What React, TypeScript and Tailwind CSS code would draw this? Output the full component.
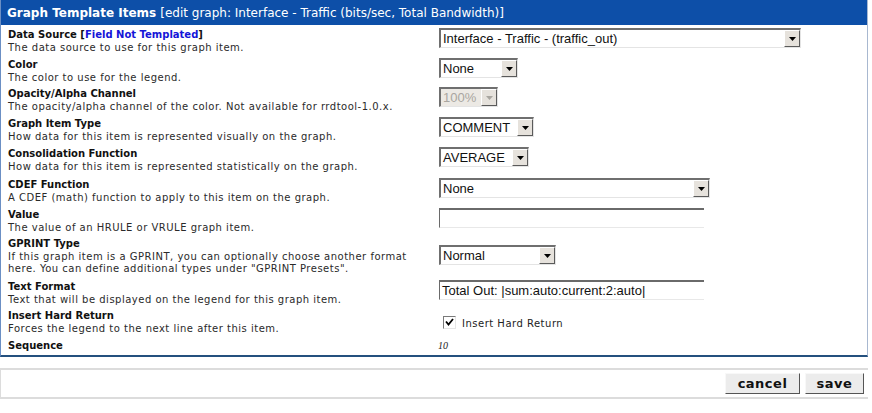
import React from "react";

const V = { fontFamily: '"DejaVu Sans", Verdana, sans-serif' };
const A = { fontFamily: '"Liberation Sans", Arial, sans-serif' };

function Select({ w, text, disabled }: { w: number; text: string; disabled?: boolean }) {
  return (
    <div
      className={`flex h-[20px] items-stretch border-t-2 border-l-2 border-b border-r border-t-[#6f6f6f] border-l-[#6f6f6f] border-b-[#e4e4e4] border-r-[#e4e4e4] ${disabled ? "bg-[#ece9e4]" : "bg-white"}`}
      style={{ width: w }}
    >
      <div
        className={`flex-1 pl-[2px] text-[13px] leading-[17px] whitespace-nowrap overflow-hidden ${disabled ? "text-[#a9a6a0]" : "text-[#111]"}`}
        style={A}
      >
        {text}
      </div>
      <div className="w-[16px] h-[17px] flex items-center justify-center bg-[#e6e2dc] border-t border-l border-t-white border-l-white border-b border-r border-b-[#5a5a5a] border-r-[#5a5a5a]">
        <svg width="7" height="4" viewBox="0 0 7 4">
          <polygon points="0,0 7,0 3.5,4" fill={disabled ? "#a9a6a0" : "#000"} />
        </svg>
      </div>
    </div>
  );
}

function TextInput({ w, value }: { w: number; value: string }) {
  return (
    <div
      className="h-[20px] border-t-2 border-l border-t-[#6a6a6a] border-l-[#6a6a6a] border-b border-b-[#e8e8e8] bg-white pl-[2px] text-[13px] leading-[17px] text-[#111] whitespace-nowrap"
      style={{ ...A, width: w }}
    >
      {value}
    </div>
  );
}

type Row = { label: React.ReactNode; desc: React.ReactNode; ctrl: React.ReactNode; h: number };

export default function App() {
  const rows: Row[] = [
    {
      label: (
        <>
          Data Source [<span className="text-[#1515d8]">Field Not Templated</span>]
        </>
      ),
      desc: "The data source to use for this graph item.",
      ctrl: <Select w={362} text="Interface - Traffic - (traffic_out)" />,
      h: 30,
    },
    { label: "Color", desc: "The color to use for the legend.", ctrl: <Select w={79} text="None" />, h: 29 },
    {
      label: "Opacity/Alpha Channel",
      desc: "The opacity/alpha channel of the color. Not available for rrdtool-1.0.x.",
      ctrl: <Select w={59} text="100%" disabled />,
      h: 30,
    },
    {
      label: "Graph Item Type",
      desc: "How data for this item is represented visually on the graph.",
      ctrl: <Select w={95} text="COMMENT" />,
      h: 30,
    },
    {
      label: "Consolidation Function",
      desc: "How data for this item is represented statistically on the graph.",
      ctrl: <Select w={90} text="AVERAGE" />,
      h: 31,
    },
    {
      label: "CDEF Function",
      desc: "A CDEF (math) function to apply to this item on the graph.",
      ctrl: <Select w={271} text="None" />,
      h: 30,
    },
    {
      label: "Value",
      desc: "The value of an HRULE or VRULE graph item.",
      ctrl: <TextInput w={265} value="" />,
      h: 29,
    },
    {
      label: "GPRINT Type",
      desc: (
        <>
          If this graph item is a GPRINT, you can optionally choose another format
          <br />
          here. You can define additional types under "GPRINT Presets".
        </>
      ),
      ctrl: <Select w={117} text="Normal" />,
      h: 43,
    },
    {
      label: "Text Format",
      desc: "Text that will be displayed on the legend for this graph item.",
      ctrl: <TextInput w={265} value="Total Out: |sum:auto:current:2:auto|" />,
      h: 29,
    },
    {
      label: "Insert Hard Return",
      desc: "Forces the legend to the next line after this item.",
      ctrl: (
        <div className="flex items-center pl-[4px] pt-[4px]">
          <div className="w-[13px] h-[13px] bg-white border-t border-l border-t-[#7a7a7a] border-l-[#7a7a7a] border-b border-r border-b-[#e6e6e6] border-r-[#e6e6e6] flex items-center justify-center">
            <svg width="9" height="8" viewBox="0 0 9 8">
              <polyline points="1,3.5 3.5,6.5 8,1" fill="none" stroke="#000" strokeWidth="1.8" />
            </svg>
          </div>
          <span className="ml-[6px] text-[10px] tracking-[0.5px] text-[#222] leading-[14px] pt-[4px]" style={V}>
            Insert Hard Return
          </span>
        </div>
      ),
      h: 30,
    },
  ];

  return (
    <div className="w-[872px] h-[413px] bg-white" style={V}>
      <div className="w-[868px] border-l border-l-[#6b8fc4] border-r border-r-[#a8b8d0] border-b-2 border-b-[#24507e]">
        <div className="h-[25px] bg-[#0d4fa8] flex items-center pl-[6px] text-white text-[12px] whitespace-nowrap">
          <span className="font-bold">Graph Template Items</span>
          <span className="ml-[4px]">[edit graph: Interface - Traffic (bits/sec, Total Bandwidth)]</span>
        </div>
        <div className="pt-[4px]">
          {rows.map((r, i) => (
            <div key={i} className="flex" style={{ height: r.h }}>
              <div className="w-[438px] pl-[7px] text-[10px] leading-[12.5px] whitespace-nowrap">
                <div className="font-bold text-[#111]">{r.label}</div>
                <div className="text-[#2a2a2a] tracking-[0.5px]">{r.desc}</div>
              </div>
              <div className={i === 7 ? "pt-[7px]" : "-mt-[1px]"}>{r.ctrl}</div>
            </div>
          ))}
          <div className="flex h-[15px] items-start">
            <div className="w-[438px] pl-[7px] text-[10px] leading-[12.5px] font-bold text-[#111]">Sequence</div>
            <div className="-ml-[1px] text-[10px] leading-[12.5px] italic text-[#222]" style={{ fontFamily: '"Liberation Serif", serif' }}>
              10
            </div>
          </div>
        </div>
      </div>
      <div className="mt-[11px] w-[868px] h-[31px] border-t-2 border-b-2 border-l border-[#dcdcdc] flex items-center justify-end gap-[5px] pr-[4px]">
        <button className="h-[21px] w-[75px] bg-[#ececec] border border-t-[#f8f8f8] border-l-[#f8f8f8] border-b-[#555] border-r-[#555] text-[13px] font-bold text-[#111] tracking-[0.5px]" style={V}>
          cancel
        </button>
        <button className="h-[21px] w-[59px] bg-[#ececec] border border-t-[#f8f8f8] border-l-[#f8f8f8] border-b-[#555] border-r-[#555] text-[13px] font-bold text-[#111] tracking-[0.5px]" style={V}>
          save
        </button>
      </div>
    </div>
  );
}
